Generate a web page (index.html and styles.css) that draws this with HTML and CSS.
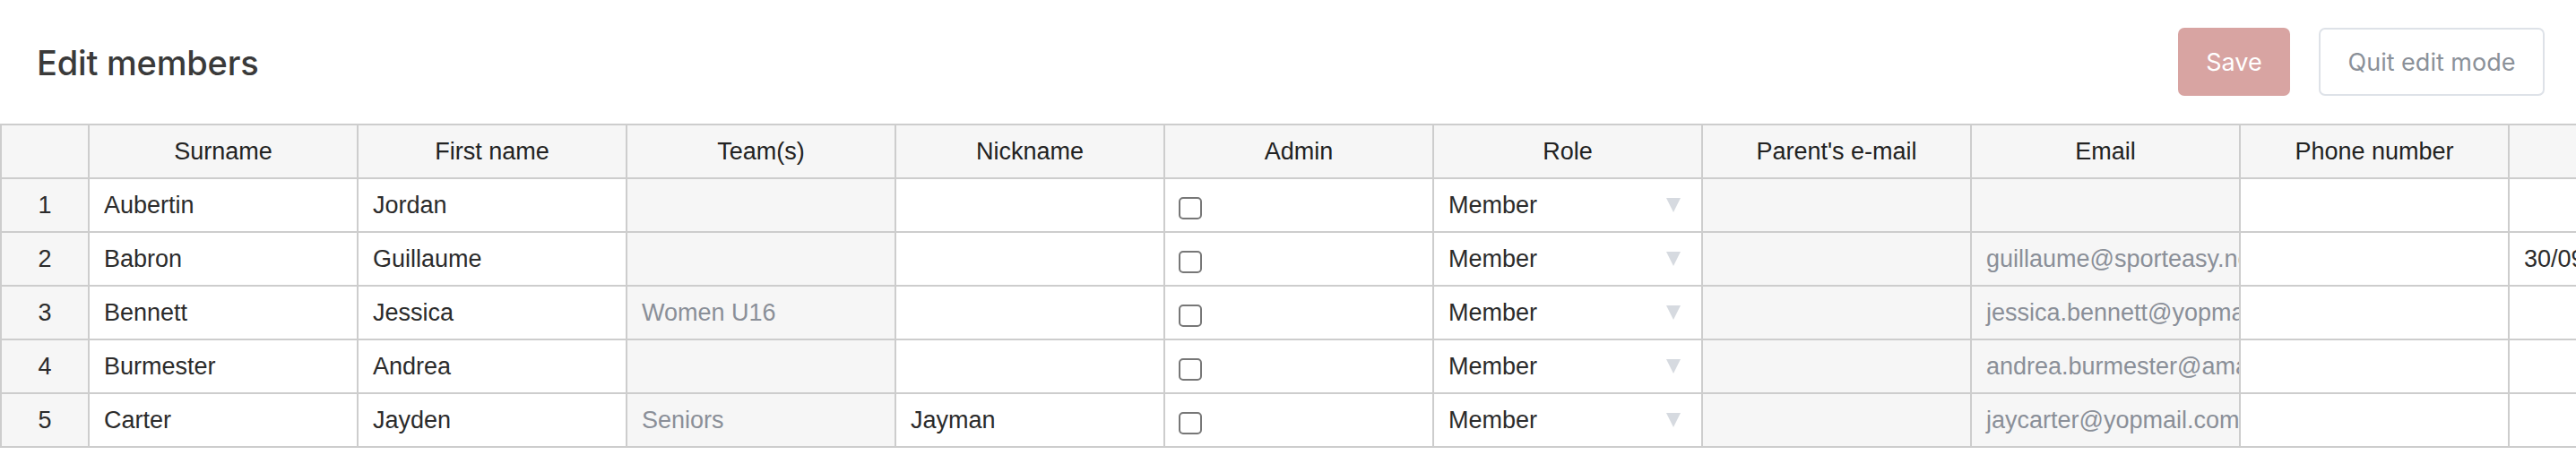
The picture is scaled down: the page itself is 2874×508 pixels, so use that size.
FILE: index.html
```html
<!DOCTYPE html>
<html lang="en">
<head>
<meta charset="utf-8">
<title>Edit members</title>
<link rel="stylesheet" href="styles.css">
</head>
<body>
<div class="page">
  <header class="topbar">
    <h1 class="title">Edit members</h1>
    <div class="actions">
      <button class="btn btn-save" type="button">Save</button>
      <button class="btn btn-quit" type="button">Quit edit mode</button>
    </div>
  </header>
  <div class="grid-wrap">
    <table class="grid">
      <colgroup>
        <col class="c-idx">
        <col class="c-std"><col class="c-std"><col class="c-std"><col class="c-std"><col class="c-std">
        <col class="c-std"><col class="c-std"><col class="c-std"><col class="c-std"><col class="c-std">
      </colgroup>
      <thead>
        <tr>
          <th></th>
          <th>Surname</th>
          <th>First name</th>
          <th>Team(s)</th>
          <th>Nickname</th>
          <th>Admin</th>
          <th>Role</th>
          <th>Parent's e-mail</th>
          <th>Email</th>
          <th>Phone number</th>
          <th>Date of birth</th>
        </tr>
      </thead>
      <tbody>
        <tr>
          <td class="idx">1</td>
          <td>Aubertin</td>
          <td>Jordan</td>
          <td class="ro"></td>
          <td></td>
          <td class="check"><input type="checkbox" class="cb"></td>
          <td class="role"><div class="select"><span>Member</span><svg class="caret" width="16" height="16" viewBox="0 0 16 16"><polygon points="0,0 16,0 8,16"/></svg></div></td>
          <td class="ro"></td>
          <td class="ro"></td>
          <td></td>
          <td></td>
        </tr>
        <tr>
          <td class="idx">2</td>
          <td>Babron</td>
          <td>Guillaume</td>
          <td class="ro"></td>
          <td></td>
          <td class="check"><input type="checkbox" class="cb"></td>
          <td class="role"><div class="select"><span>Member</span><svg class="caret" width="16" height="16" viewBox="0 0 16 16"><polygon points="0,0 16,0 8,16"/></svg></div></td>
          <td class="ro"></td>
          <td class="ro">guillaume@sporteasy.net</td>
          <td></td>
          <td>30/09/1985</td>
        </tr>
        <tr>
          <td class="idx">3</td>
          <td>Bennett</td>
          <td>Jessica</td>
          <td class="ro">Women U16</td>
          <td></td>
          <td class="check"><input type="checkbox" class="cb"></td>
          <td class="role"><div class="select"><span>Member</span><svg class="caret" width="16" height="16" viewBox="0 0 16 16"><polygon points="0,0 16,0 8,16"/></svg></div></td>
          <td class="ro"></td>
          <td class="ro">jessica.bennett@yopmail.com</td>
          <td></td>
          <td></td>
        </tr>
        <tr>
          <td class="idx">4</td>
          <td>Burmester</td>
          <td>Andrea</td>
          <td class="ro"></td>
          <td></td>
          <td class="check"><input type="checkbox" class="cb"></td>
          <td class="role"><div class="select"><span>Member</span><svg class="caret" width="16" height="16" viewBox="0 0 16 16"><polygon points="0,0 16,0 8,16"/></svg></div></td>
          <td class="ro"></td>
          <td class="ro">andrea.burmester@amail.com</td>
          <td></td>
          <td></td>
        </tr>
        <tr>
          <td class="idx">5</td>
          <td>Carter</td>
          <td>Jayden</td>
          <td class="ro">Seniors</td>
          <td>Jayman</td>
          <td class="check"><input type="checkbox" class="cb"></td>
          <td class="role"><div class="select"><span>Member</span><svg class="caret" width="16" height="16" viewBox="0 0 16 16"><polygon points="0,0 16,0 8,16"/></svg></div></td>
          <td class="ro"></td>
          <td class="ro">jaycarter@yopmail.com</td>
          <td></td>
          <td></td>
        </tr>
      </tbody>
    </table>
  </div>
</div>
</body>
</html>
```

FILE: styles.css
```css
html, body {
  margin: 0;
  padding: 0;
  background: #ffffff;
  overflow: hidden;
}

.page {
  width: 2874px;
  overflow: hidden;
}

.topbar {
  height: 138px;
  display: flex;
  align-items: center;
  justify-content: space-between;
  padding: 0 35px 0 41px;
  box-sizing: border-box;
}

.title {
  margin: 0;
  font-family: Inter, "Liberation Sans", sans-serif;
  font-weight: 500;
  font-size: 38px;
  letter-spacing: -0.2px;
  color: #3a3a3a;
  padding-top: 2px;
}

.actions {
  display: flex;
  gap: 32px;
  align-items: center;
}

.btn {
  font-family: Inter, "Liberation Sans", sans-serif;
  font-size: 27px;
  height: 76px;
  border-radius: 7px;
  box-sizing: border-box;
  cursor: pointer;
}

.btn-save {
  width: 125px;
  background: #d8a4a2;
  border: none;
  color: #ffffff;
}

.btn-quit {
  width: 252px;
  background: #ffffff;
  border: 2px solid #dee2e8;
  color: #8b9199;
}

.grid-wrap {
  width: 2874px;
  overflow: hidden;
}

.grid {
  table-layout: fixed;
  border-collapse: collapse;
  width: 3098px;
  font-family: "Liberation Sans", Arial, sans-serif;
  font-size: 27px;
  color: #2b2b2b;
}

.c-idx { width: 98px; }
.c-std { width: 300px; }

.grid th,
.grid td {
  border: 2px solid #cdcdcd;
  height: 60px;
  padding: 0 16px;
  box-sizing: border-box;
  white-space: nowrap;
  overflow: hidden;
  vertical-align: middle;
}

.grid th {
  background: #f6f6f6;
  font-weight: 400;
  text-align: center;
  color: #222222;
}

.grid td {
  background: #ffffff;
  text-align: left;
}

.grid td.idx {
  background: #f6f6f6;
  text-align: center;
  padding: 0;
}

.grid td.ro {
  background: #f6f6f6;
  color: #8a8f98;
  text-overflow: clip;
}

.grid td.check {
  padding-left: 15px;
}

.cb {
  appearance: none;
  -webkit-appearance: none;
  display: block;
  width: 26px;
  height: 25px;
  margin: 7px 0 0 0;
  border: 2px solid #777777;
  border-radius: 5px;
  background: #ffffff;
  box-sizing: border-box;
}

.grid td.role {
  padding: 0 23px 0 16px;
}

.select {
  display: flex;
  align-items: center;
  justify-content: space-between;
}

.caret {
  display: block;
  fill: #d6dae0;
}
```
